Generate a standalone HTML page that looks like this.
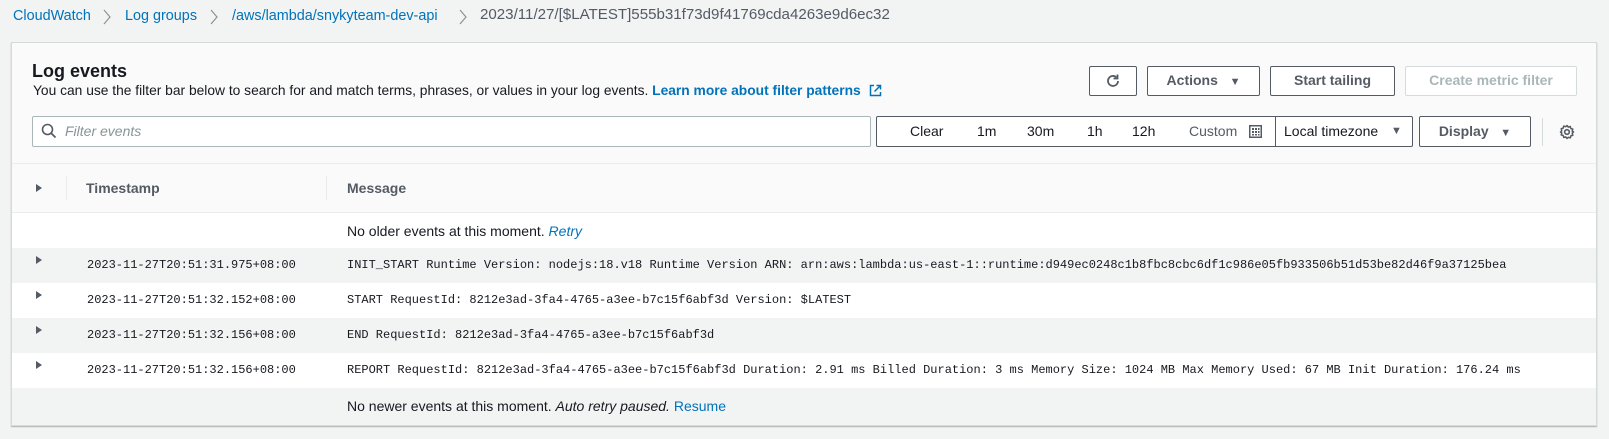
<!DOCTYPE html>
<html><head><meta charset="utf-8"><style>
*{box-sizing:border-box;margin:0;padding:0}
body{width:1609px;height:439px;background:#f2f3f3;font-family:"Liberation Sans",sans-serif;color:#16191f;position:relative;overflow:hidden;font-size:14px}
.a{position:absolute;white-space:nowrap}
.link{color:#0073bb}
.bc{top:7px;font-size:14.4px;line-height:18px}
.panel{position:absolute;left:11px;top:42px;width:1586px;height:384px;background:#fff;border:1px solid #d5dbdb;box-shadow:0 1px 1px rgba(0,28,36,.3)}
.btn{position:absolute;border:1px solid #545b64;border-radius:2px;background:#fff;color:#545b64;font-weight:bold;font-size:14px;text-align:center;line-height:27px;height:30px;top:66px}
.mono{font-family:"Liberation Mono",monospace;font-size:12px;color:#16191f}
.row{position:absolute;left:12px;width:1584px;height:35px}
.tri{position:absolute;left:24px;width:0;height:0;border-left:6px solid #545b64;border-top:4px solid transparent;border-bottom:4px solid transparent}
.tb{position:absolute;top:116px;line-height:31px;font-size:14px}
</style></head><body>
<div class="a bc link" style="left:13px">CloudWatch</div>
<svg class="a" style="left:103px;top:9px" width="8" height="16" viewBox="0 0 8 16"><path d="M1 1l6 7-6 7" fill="none" stroke="#879596" stroke-width="1.2"/></svg>
<div class="a bc link" style="left:125px">Log groups</div>
<svg class="a" style="left:210px;top:9px" width="8" height="16" viewBox="0 0 8 16"><path d="M1 1l6 7-6 7" fill="none" stroke="#879596" stroke-width="1.2"/></svg>
<div class="a bc link" style="left:232px">/aws/lambda/snykyteam-dev-api</div>
<svg class="a" style="left:459px;top:9px" width="8" height="16" viewBox="0 0 8 16"><path d="M1 1l6 7-6 7" fill="none" stroke="#879596" stroke-width="1.2"/></svg>
<div class="a bc" style="left:480px;color:#545b64;font-size:15.1px;top:6px">2023/11/27/[$LATEST]555b31f73d9f41769cda4263e9d6ec32</div>

<div class="panel">
  <div style="position:absolute;left:0;top:0;width:100%;height:170px;background:#fafafa;border-bottom:1px solid #eaeded"></div>
  <div style="position:absolute;left:0;top:120px;width:100%;height:1px;background:#eaeded"></div>
</div>
<div class="a" style="left:32px;top:61px;font-size:18px;font-weight:bold;line-height:20px">Log events</div>
<div class="a" style="left:33px;top:82px;font-size:13.8px;line-height:18px">You can use the filter bar below to search for and match terms, phrases, or values in your log events. <span class="link" style="font-weight:bold">Learn more about filter patterns</span>
<svg width="13" height="13" viewBox="0 0 13 13" style="vertical-align:-2px;margin-left:4px"><path d="M5 1.5H1.5v10h10V8M7.5 1.5h4v4M11.5 1.5l-6 6" fill="none" stroke="#0073bb" stroke-width="1.5"/></svg></div>

<div class="btn" style="left:1089px;width:48px"><svg width="16" height="16" viewBox="0 0 16 16" style="margin-top:6px"><path d="M13 8a5 5 0 1 1-1.6-3.7" fill="none" stroke="#545b64" stroke-width="1.8"/><path d="M12.5 1.5v4h-4" fill="none" stroke="#545b64" stroke-width="1.8"/></svg></div>
<div class="btn" style="left:1147px;width:113px">Actions&nbsp;&nbsp;&nbsp;<span style="font-size:11px">▼</span></div>
<div class="btn" style="left:1270px;width:125px">Start tailing</div>
<div class="btn" style="left:1405px;width:172px;border-color:#d5dbdb;color:#aab7b8">Create metric filter</div>

<div class="a" style="left:32px;top:116px;width:839px;height:31px;background:#fff;border:1px solid #aab7b8;border-radius:2px"></div>
<svg class="a" style="left:41px;top:123px" width="16" height="16" viewBox="0 0 16 16"><circle cx="6.5" cy="6.5" r="5" fill="none" stroke="#545b64" stroke-width="1.6"/><path d="M10 10l4.5 4.5" stroke="#545b64" stroke-width="1.8"/></svg>
<div class="a" style="left:65px;top:121px;line-height:20px;font-style:italic;color:#879596;font-size:14px">Filter events</div>

<div class="a" style="left:876px;top:116px;width:537px;height:31px;background:#fff;border:1px solid #545b64;border-radius:2px"></div>
<div class="a" style="left:1275px;top:117px;width:1px;height:29px;background:#545b64"></div>
<div class="tb" style="left:910px">Clear</div>
<div class="tb" style="left:977px">1m</div>
<div class="tb" style="left:1027px">30m</div>
<div class="tb" style="left:1087px">1h</div>
<div class="tb" style="left:1132px">12h</div>
<div class="tb" style="left:1189px;color:#545b64">Custom</div>
<svg class="a" style="left:1249px;top:125px" width="13" height="13" viewBox="0 0 13 13"><rect x="0.75" y="0.75" width="11.5" height="11.5" fill="none" stroke="#545b64" stroke-width="1.5"/><g fill="#545b64"><rect x="3" y="3" width="2" height="2"/><rect x="6" y="3" width="2" height="2"/><rect x="9" y="3" width="1.5" height="2"/><rect x="3" y="6" width="2" height="2"/><rect x="6" y="6" width="2" height="2"/><rect x="9" y="6" width="1.5" height="2"/><rect x="3" y="9" width="2" height="1.5"/><rect x="6" y="9" width="2" height="1.5"/><rect x="9" y="9" width="1.5" height="1.5"/></g></svg>
<div class="tb" style="left:1284px">Local timezone</div>
<div class="tb" style="left:1391px;font-size:11px;color:#545b64">▼</div>
<div class="a" style="left:1419px;top:116px;width:112px;height:31px;border:1px solid #545b64;border-radius:2px;background:#fff;color:#545b64;font-weight:bold;line-height:29px;text-align:center">Display&nbsp;&nbsp;&nbsp;<span style="font-size:11px">▼</span></div>
<div class="a" style="left:1542px;top:118px;width:1px;height:28px;background:#d5dbdb"></div>
<svg class="a" style="left:1559px;top:124px" width="16" height="16" viewBox="0 0 16 16"><circle cx="8" cy="8" r="2.3" fill="none" stroke="#545b64" stroke-width="1.6"/><path d="M8 1.5l1.3 1.6 2-.6.5 2 2 .6-.6 2L14.5 8l-1.3 1.3.6 2-2 .6-.5 2-2-.6L8 14.5l-1.3-1.6-2 .6-.5-2-2-.6.6-2L1.5 8l1.3-1.3-.6-2 2-.6.5-2 2 .6z" fill="none" stroke="#545b64" stroke-width="1.5" stroke-linejoin="round"/></svg>

<div class="tri" style="left:36px;top:184px"></div>
<div class="a" style="left:66px;top:176px;width:1px;height:24px;background:#eaeded"></div>
<div class="a" style="left:326px;top:176px;width:1px;height:24px;background:#eaeded"></div>
<div class="a" style="left:86px;top:179px;font-weight:bold;color:#545b64;line-height:18px">Timestamp</div>
<div class="a" style="left:347px;top:179px;font-weight:bold;color:#545b64;line-height:18px">Message</div>

<div class="row" style="top:213px;background:#fff"></div>
<div class="a" style="left:347px;top:222px;line-height:18px">No older events at this moment. <i class="link">Retry</i></div>

<div class="row" style="top:248px;background:#f2f3f3"></div>
<div class="tri" style="left:36px;top:256px"></div>
<div class="a mono" style="left:87px;top:258px">2023-11-27T20:51:31.975+08:00</div>
<div class="a mono" style="left:347px;top:258px">INIT_START Runtime Version: nodejs:18.v18 Runtime Version ARN: arn:aws:lambda:us-east-1::runtime:d949ec0248c1b8fbc8cbc6df1c986e05fb933506b51d53be82d46f9a37125bea</div>

<div class="row" style="top:283px;background:#fff"></div>
<div class="tri" style="left:36px;top:291px"></div>
<div class="a mono" style="left:87px;top:293px">2023-11-27T20:51:32.152+08:00</div>
<div class="a mono" style="left:347px;top:293px">START RequestId: 8212e3ad-3fa4-4765-a3ee-b7c15f6abf3d Version: $LATEST</div>

<div class="row" style="top:318px;background:#f2f3f3"></div>
<div class="tri" style="left:36px;top:326px"></div>
<div class="a mono" style="left:87px;top:328px">2023-11-27T20:51:32.156+08:00</div>
<div class="a mono" style="left:347px;top:328px">END RequestId: 8212e3ad-3fa4-4765-a3ee-b7c15f6abf3d</div>

<div class="row" style="top:353px;background:#fff"></div>
<div class="tri" style="left:36px;top:361px"></div>
<div class="a mono" style="left:87px;top:363px">2023-11-27T20:51:32.156+08:00</div>
<div class="a mono" style="left:347px;top:363px">REPORT RequestId: 8212e3ad-3fa4-4765-a3ee-b7c15f6abf3d Duration: 2.91 ms Billed Duration: 3 ms Memory Size: 1024 MB Max Memory Used: 67 MB Init Duration: 176.24 ms</div>

<div class="row" style="top:388px;height:37px;background:#f2f3f3"></div>
<div class="a" style="left:347px;top:397px;line-height:18px">No newer events at this moment. <i>Auto retry paused.</i> <span class="link">Resume</span></div>
</body></html>
